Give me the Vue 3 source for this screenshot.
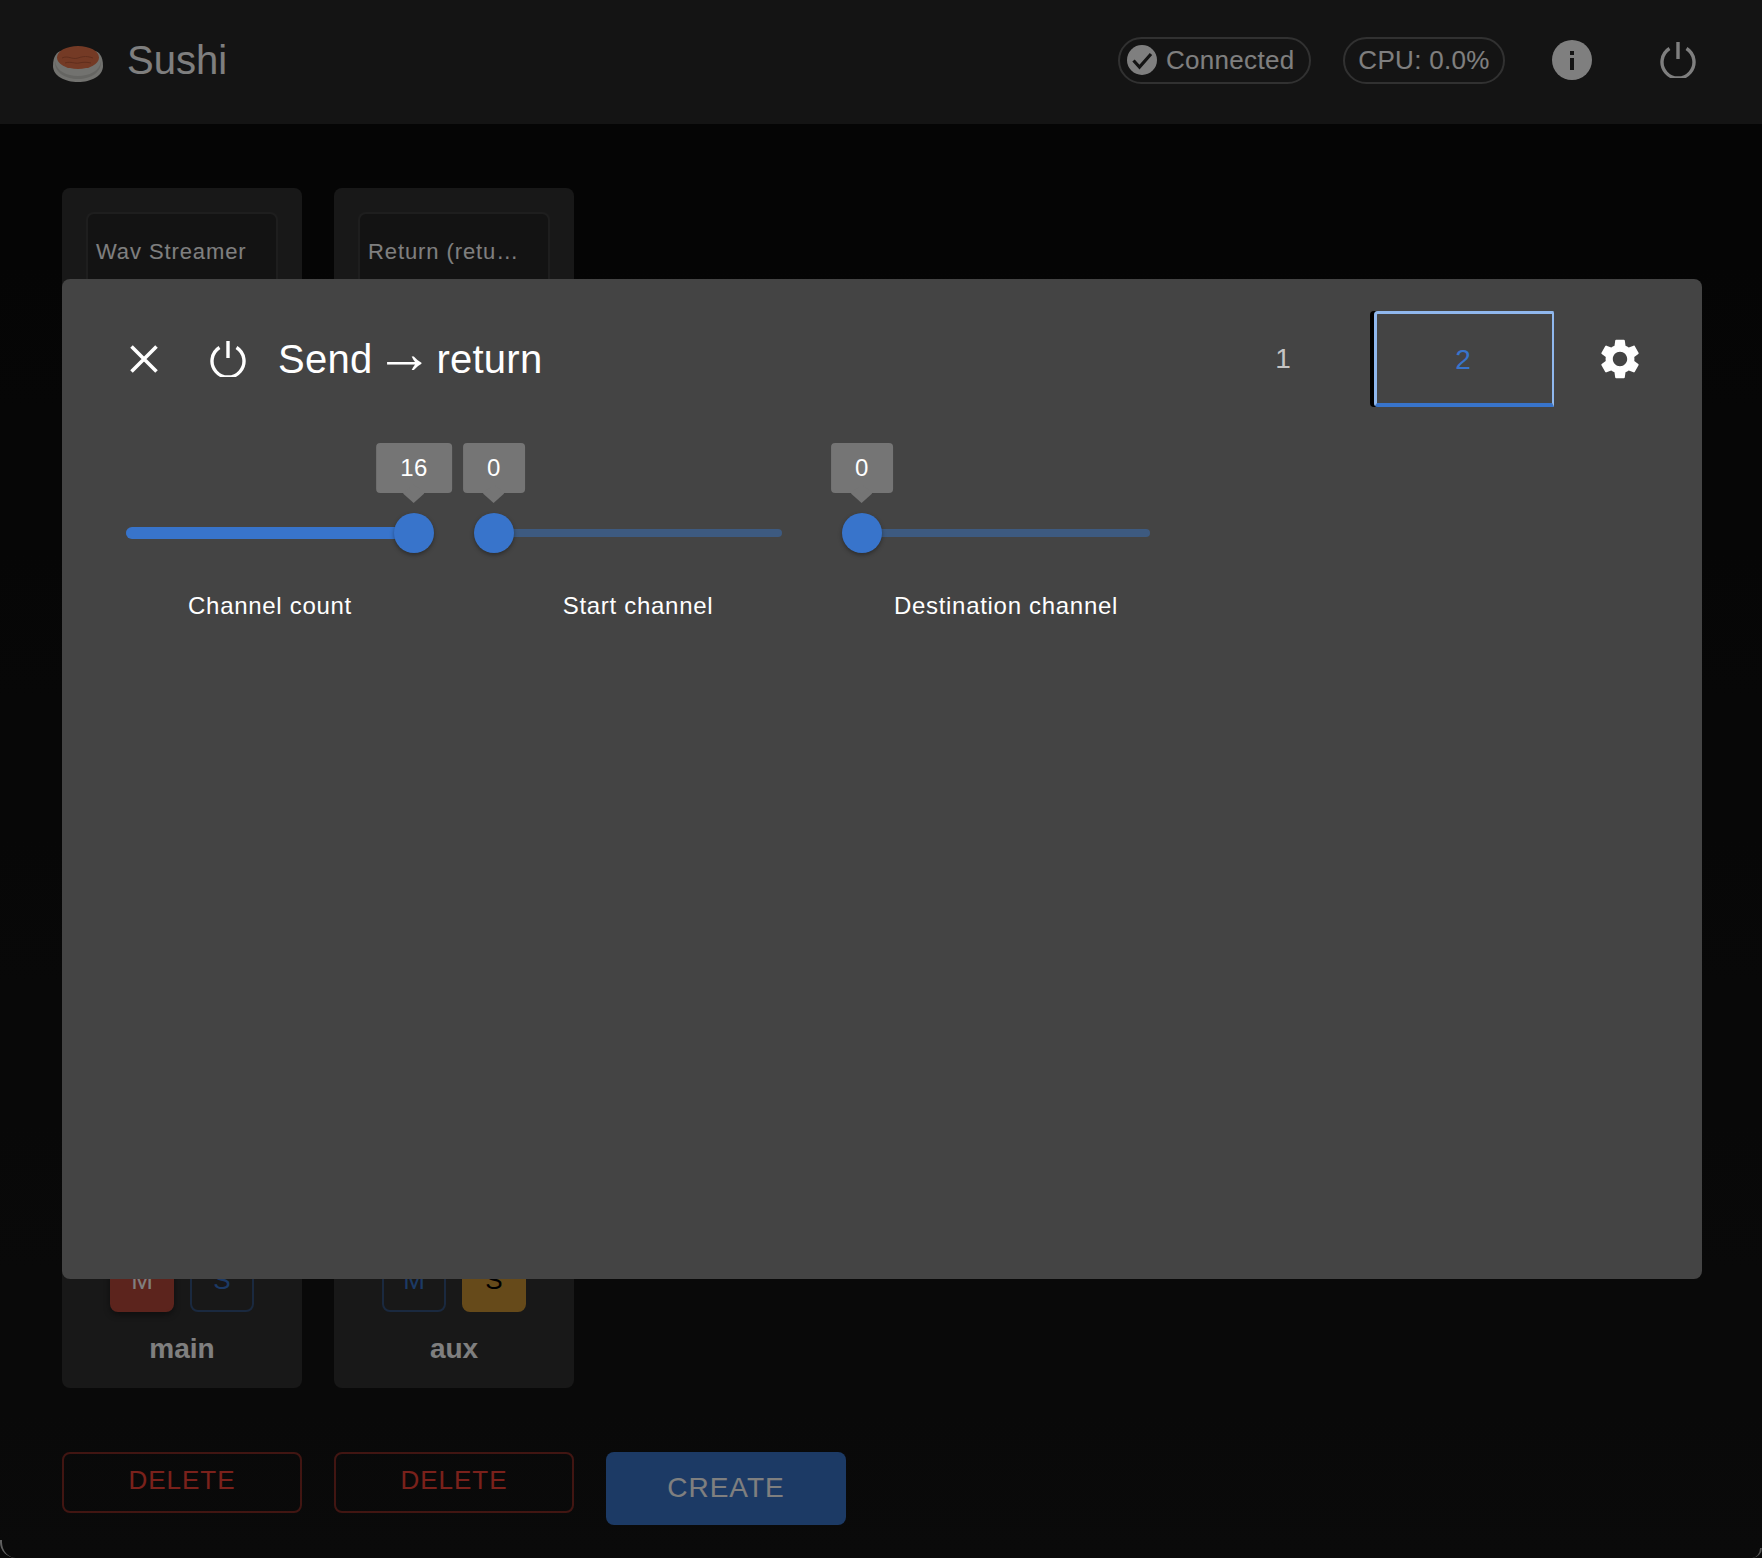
<script setup>
const strips = [
  { name: 'Wav Streamer', track: 'main', delete: 'DELETE', muted: true, solo: false },
  { name: 'Return (retu…', track: 'aux', delete: 'DELETE', muted: false, solo: true }
]
const sliders = [
  { label: 'Channel count', value: 16, pct: 100 },
  { label: 'Start channel', value: 0, pct: 0 },
  { label: 'Destination channel', value: 0, pct: 0 }
]
</script>

<template>
  <div class="page">
    <header class="appbar">
      <svg class="logo" viewBox="0 0 50 36">
        <path d="M0 20C0 10 4 6 8 5H42C46 6 50 10 50 20C50 30 38 36 25 36S0 30 0 20Z" fill="#e4e4de" />
        <path d="M2 15C3 25 14 30 25 30S47 25 48 15C49 26 38 33 25 33S1 26 2 15Z" fill="#cacac4" />
        <ellipse cx="25" cy="11.500" rx="21" ry="11.500" fill="#e8744a" />
        <path d="M9 12c6-3 10 2 16 0s9-2 15 0M12 17c6-2 10 1 14 0s8-1 12 0" fill="none" stroke="#c05c3a" stroke-width="1" />
      </svg>
      <span class="brand">Sushi</span>
      <div class="spacer"></div>
      <div class="chip chip-conn">
        <svg class="chip-icon" viewBox="0 0 30 30">
          <circle cx="15" cy="15" r="15" fill="#fff" />
          <path d="M6.500 15.500l6 6.500L24 9" fill="none" stroke="#282828" stroke-width="3.200" />
        </svg>
        <span>Connected</span>
      </div>
      <div class="chip chip-cpu">CPU: 0.0%</div>
      <svg class="bar-info" viewBox="0 0 40 40">
        <circle cx="20" cy="20" r="20" fill="#fff" />
        <rect x="18" y="18" width="4" height="12" fill="#282828" />
        <rect x="18" y="11" width="4" height="4" fill="#282828" />
      </svg>
      <svg class="bar-power" viewBox="0 0 36 36">
        <path d="M18 0v17" fill="none" stroke="#fff" stroke-width="3.400" />
        <path d="M9.500 6.500A16 16 0 1 0 26.500 6.500" fill="none" stroke="#fff" stroke-width="3.400" />
      </svg>
    </header>

    <main class="rack">
      <div class="columns">
        <div v-for="s in strips" :key="s.track" class="col">
          <section class="strip">
            <div class="plugin">{{ s.name }}</div>
            <div class="grow"></div>
            <div class="ms">
              <button class="ms-btn" :class="{ mute: s.muted }">M</button>
              <button class="ms-btn" :class="{ solo: s.solo }">S</button>
            </div>
            <div class="track">{{ s.track }}</div>
          </section>
          <button class="del">{{ s.delete }}</button>
        </div>
        <div class="col col-end">
          <button class="create">CREATE</button>
        </div>
      </div>
    </main>

    <div class="scrim"></div>
    <div class="corner corner-l"></div>
    <div class="corner corner-r"></div>

    <div class="modal">
      <div class="modal-head">
        <svg class="close" viewBox="0 0 28 28">
          <path d="M1.500 1.500l25 25M26.500 1.500l-25 25" fill="none" stroke="#fff" stroke-width="3.600" />
        </svg>
        <svg class="m-power" viewBox="0 0 36 36">
          <path d="M18 0v17" fill="none" stroke="#fff" stroke-width="3.400" />
          <path d="M9.500 6.500A16 16 0 1 0 26.500 6.500" fill="none" stroke="#fff" stroke-width="3.400" />
        </svg>
        <h2 class="title">Send <span class="arrow">→</span> return</h2>
        <div class="spacer"></div>
        <div class="tab tab-off">1</div>
        <div class="tab tab-on">2</div>
        <svg class="gear" viewBox="0 0 24 24">
          <path fill="#fff" d="M19.140 12.940c.04-.3.060-.61.060-.94 0-.32-.02-.64-.07-.94l2.030-1.580c.18-.14.230-.41.120-.61l-1.920-3.320c-.12-.22-.37-.29-.59-.22l-2.390.96c-.5-.38-1.030-.7-1.620-.94l-.36-2.540c-.04-.24-.24-.41-.48-.41h-3.840c-.24 0-.43.17-.47.41l-.36 2.540c-.59.24-1.130.57-1.620.94l-2.390-.96c-.22-.08-.47 0-.59.22L2.740 8.870c-.12.21-.08.47.12.61l2.030 1.580c-.05.3-.09.63-.09.94s.02.64.07.94l-2.030 1.580c-.18.14-.23.41-.12.61l1.920 3.320c.12.22.37.29.59.22l2.390-.96c.5.38 1.030.7 1.620.94l.36 2.540c.05.24.24.41.48.41h3.840c.24 0 .44-.17.47-.41l.36-2.540c.59-.24 1.130-.56 1.620-.94l2.390.96c.22.08.47 0 .59-.22l1.920-3.320c.12-.22.07-.47-.12-.61l-2.010-1.580zM12 15.600c-1.980 0-3.600-1.620-3.600-3.600s1.620-3.600 3.600-3.600 3.600 1.620 3.600 3.600-1.620 3.600-3.600 3.600z" />
        </svg>
      </div>
      <div class="sliders">
        <div v-for="sl in sliders" :key="sl.label" class="slider">
          <div class="rail-box">
            <div class="rail"></div>
            <div class="fill" :style="{ width: sl.pct + '%' }"></div>
            <div class="thumb" :style="{ left: sl.pct + '%' }">
              <div class="tip">{{ sl.value }}</div>
            </div>
          </div>
          <div class="s-label">{{ sl.label }}</div>
        </div>
      </div>
    </div>
  </div>
</template>

<style>
html, body { margin: 0; background: #000; }
</style>

<style scoped>
.page {
  position: relative;
  width: 1762px;
  height: 1558px;
  overflow: hidden;
  background: linear-gradient(#0a0a0a 120px, #141414);
  font-family: "Liberation Sans", Arial, sans-serif;
  color: #fff;
}
.appbar {
  height: 124px;
  box-sizing: border-box;
  background: #282828;
  display: flex;
  align-items: center;
  padding: 0 66px 4px 53px;
}
.logo { width: 50px; height: 36px; margin-top: 8px; }
.brand { font-size: 40px; margin-left: 24px; color: #fff; }
.spacer { flex: 1; }
.chip {
  height: 47px;
  box-sizing: border-box;
  border: 2px solid rgba(255,255,255,.27);
  border-radius: 24px;
  display: flex;
  align-items: center;
  font-size: 26px;
  letter-spacing: .3px;
}
.chip-conn { width: 193px; padding-left: 7px; gap: 9px; }
.chip-icon { width: 30px; height: 30px; }
.chip-cpu { width: 162px; margin-left: 32px; justify-content: center; }
.bar-info { width: 40px; height: 40px; margin-left: 47px; }
.bar-power { width: 36px; height: 36px; margin-left: 68px; }

.rack { padding: 64px 62px 0; }
.columns { display: flex; gap: 32px; }
.col { width: 240px; display: flex; flex-direction: column; }
.col-end { justify-content: flex-end; height: 1337px; }
.strip {
  height: 1200px;
  box-sizing: border-box;
  background: #303030;
  border-radius: 8px;
  padding: 24px;
  display: flex;
  flex-direction: column;
}
.plugin {
  height: 100px;
  box-sizing: border-box;
  border: 2px solid rgba(255,255,255,.1);
  border-radius: 8px;
  background: #262626;
  padding: 22px 8px;
  font-size: 22px;
  line-height: 32px;
  letter-spacing: .9px;
  white-space: nowrap;
}
.grow { flex: 1; }
.ms { display: flex; justify-content: center; gap: 16px; margin: 0 -8px; }
.ms-btn {
  width: 64px;
  height: 64px;
  box-sizing: border-box;
  border: 2px solid rgba(56,116,203,.5);
  border-radius: 8px;
  background: transparent;
  color: #3874cb;
  font: 26px "Liberation Sans", Arial, sans-serif;
  padding: 0;
}
.mute { background: #b8483a; border-color: #b8483a; color: #fff; box-shadow: 0 3px 6px rgba(0,0,0,.4); }
.solo { background: #cc9434; border-color: #cc9434; color: #000; }
.track { margin-top: 21px; height: 31px; text-align: center; font-size: 28px; font-weight: 700; line-height: 32px; }
.del {
  margin-top: 64px;
  height: 61px;
  box-sizing: border-box;
  border: 2px solid rgba(244,67,54,.5);
  border-radius: 8px;
  background: transparent;
  color: #f44336;
  font: 26px "Liberation Sans", Arial, sans-serif;
  letter-spacing: 1px;
  padding: 0 0 4px;
}
.create {
  height: 73px;
  border: 0;
  border-radius: 8px;
  background: #3874cb;
  color: #fff;
  font: 28px "Liberation Sans", Arial, sans-serif;
  letter-spacing: 1px;
  padding: 0 0 2px;
}

.scrim { position: absolute; inset: 0; background: rgba(0,0,0,.5); }
.corner { position: absolute; bottom: 0; box-sizing: border-box; }
.corner-l {
  left: 0;
  width: 16px;
  height: 18px;
  border-left: 2px solid rgba(255,255,255,.35);
  border-bottom-left-radius: 18px;
}
.corner-r {
  right: 0;
  width: 10px;
  height: 10px;
  border-right: 2px solid rgba(255,255,255,.3);
  border-bottom-right-radius: 10px;
}

.modal {
  position: absolute;
  left: 62px;
  top: 279px;
  width: 1640px;
  height: 1000px;
  background: #444;
  border-radius: 8px;
  box-sizing: border-box;
  padding: 32px 58px 0 64px;
}
.modal-head { display: flex; align-items: center; height: 96px; }
.close { width: 28px; height: 28px; margin-left: 4px; }
.m-power { width: 36px; height: 36px; margin-left: 52px; }
.title { margin: 0 0 0 32px; font-size: 40px; font-weight: 400; line-height: 48px; letter-spacing: .25px; word-spacing: -8.500px; white-space: nowrap; }
.arrow { font-size: 58px; line-height: 0; }
.tab {
  height: 96px;
  box-sizing: border-box;
  display: flex;
  align-items: center;
  justify-content: center;
  font-size: 28px;
}
.tab-off { width: 174px; color: #c4c4c4; }
.tab-on {
  width: 180px;
  margin-left: 4px;
  color: #3874cb;
  padding: 2px 3px 0 0;
  border: 2px solid #90b8ee;
  border-top-width: 3px;
  border-left-width: 3px;
  border-bottom: 4px solid #3874cb;
  border-radius: 4px 2px 0 4px;
  box-shadow: -4px 0 0 #000;
}
.gear { width: 48px; height: 48px; margin-left: 42px; }
.sliders { display: flex; gap: 80px; margin-top: 120px; }
.slider { width: 288px; }
.rail-box { position: relative; height: 12px; }
.rail {
  position: absolute;
  left: 0; right: 0; top: 2px;
  height: 8px;
  border-radius: 4px;
  background: #3d5a80;
}
.fill {
  position: absolute;
  left: 0; top: 0;
  height: 12px;
  border-radius: 6px;
  background: #3874cb;
}
.thumb {
  position: absolute;
  top: -14px;
  width: 40px;
  height: 40px;
  margin-left: -20px;
  border-radius: 50%;
  background: #3874cb;
  box-shadow: 0 2px 4px rgba(0,0,0,.35);
}
.tip {
  position: absolute;
  left: 50%;
  bottom: 60px;
  transform: translateX(-50%);
  height: 50px;
  padding: 0 24px;
  border-radius: 4px;
  background: #757575;
  color: #fff;
  font-size: 24px;
  line-height: 50px;
  letter-spacing: .5px;
  white-space: nowrap;
}
.tip::after {
  content: "";
  position: absolute;
  left: 50%;
  bottom: -7.500px;
  width: 15px;
  height: 15px;
  margin-left: -7.500px;
  background: #757575;
  transform: scaleY(.9) rotate(45deg);
}
.s-label {
  margin-top: 51px;
  text-align: center;
  font-size: 24px;
  line-height: 32px;
  letter-spacing: .7px;
  white-space: nowrap;
}
</style>
